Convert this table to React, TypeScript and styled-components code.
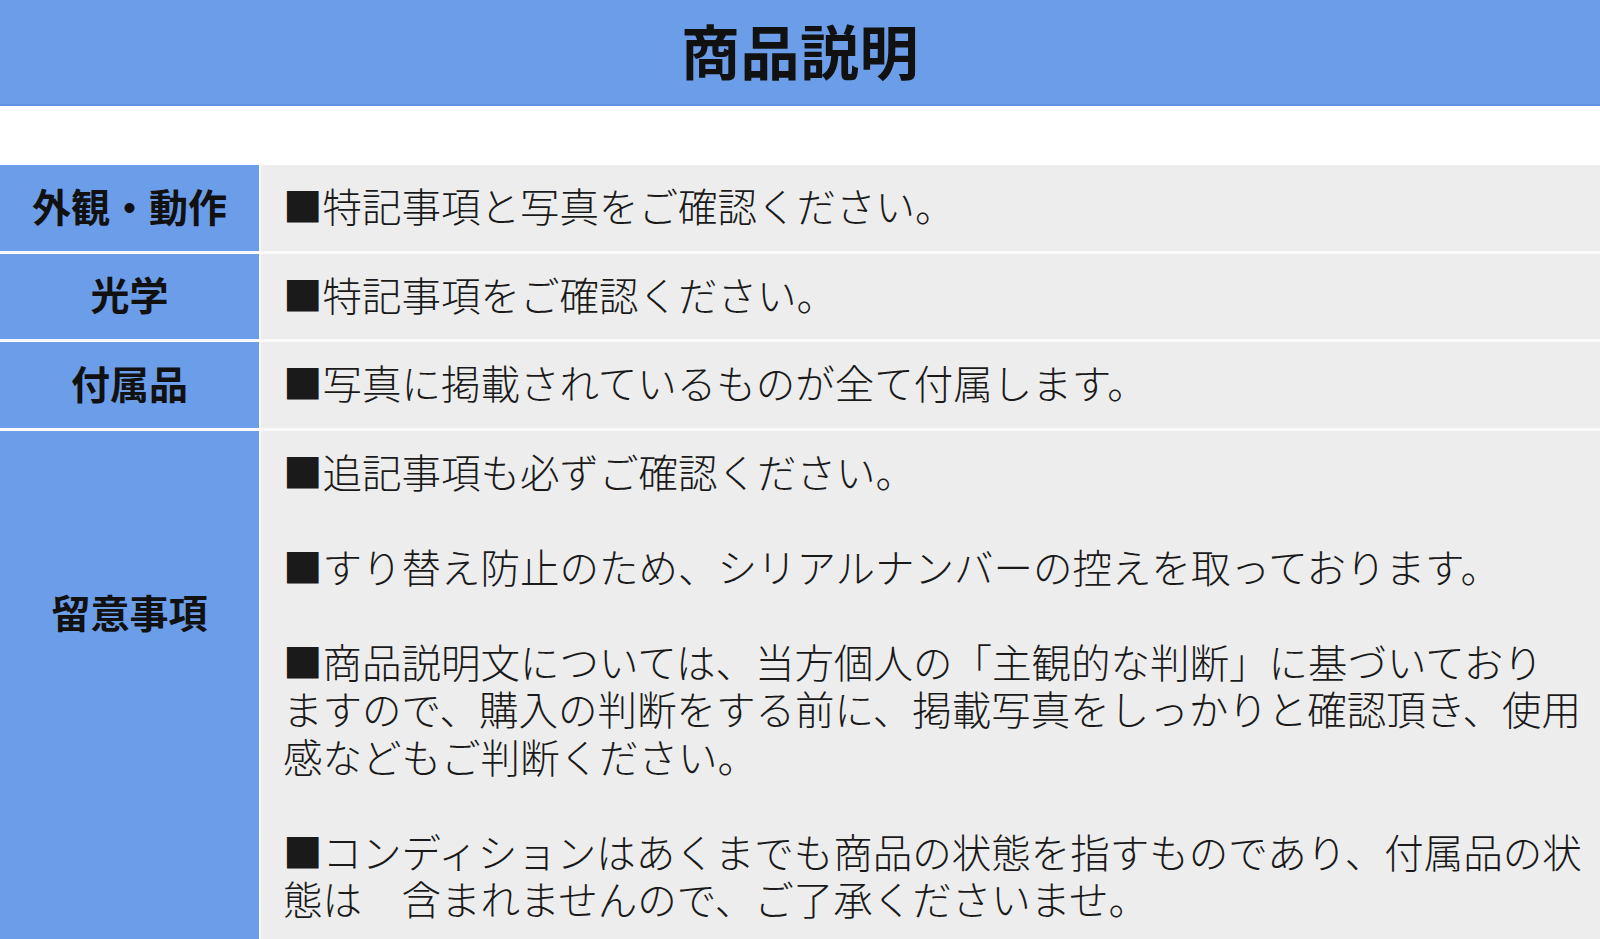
import React from 'react';
import styled, { createGlobalStyle } from 'styled-components';

const GlobalStyle = createGlobalStyle`
  html, body {
    margin: 0;
    padding: 0;
    background: #ffffff;
  }
  body {
    font-family: "Noto Sans CJK JP", "Noto Sans", sans-serif;
    color: #111;
  }
`;

const Page = styled.div`
  width: 100%;
  min-height: 939px;
  background: #fff;
`;

const Header = styled.header`
  height: 106px;
  background: #6c9de9;
  border-bottom: 2px solid #5f92e2;
  display: flex;
  align-items: center;
  justify-content: center;
  padding-bottom: 6px;
  box-sizing: border-box;
`;

const Title = styled.h1`
  margin: 0;
  font-size: 59px;
  font-weight: 700;
  line-height: 1;
  color: #111;
  letter-spacing: 0.5px;
`;

const Spacer = styled.div`
  height: 59px;
`;

const Table = styled.div`
  display: grid;
  grid-template-columns: 259px 1fr;
  column-gap: 2px;
  row-gap: 3px;
  background: #fafafa;
`;

const Label = styled.div<{ $top?: number }>`
  background: #6c9de9;
  display: flex;
  align-items: ${(p) => (p.$top ? 'flex-start' : 'center')};
  justify-content: center;
  padding-top: ${(p) => (p.$top ? `${p.$top}px` : '0')};
  padding-bottom: ${(p) => (p.$top ? '0' : '5px')};
  font-size: 39px;
  line-height: 47px;
  font-weight: 700;
  color: #111;
`;

const Cell = styled.div`
  background: #ededed;
  padding: 16px 6px 22px 22px;
  font-size: 39.5px;
  line-height: 47.5px;
  color: #1a1a1a;
  font-weight: 300;
  min-width: 0;
`;

const Para = styled.p<{ $gap?: boolean }>`
  margin: 0;
  margin-top: ${(p) => (p.$gap ? '47.5px' : '0')};
  white-space: nowrap;
`;

const rows: { label: string; top?: number; paras: React.ReactNode[] }[] = [
  { label: '外観・動作', paras: ['■特記事項と写真をご確認ください。'] },
  { label: '光学', paras: ['■特記事項をご確認ください。'] },
  { label: '付属品', paras: ['■写真に掲載されているものが全て付属します。'] },
  {
    label: '留意事項',
    top: 157,
    paras: [
      '■追記事項も必ずご確認ください。',
      '■すり替え防止のため、シリアルナンバーの控えを取っております。',
      <>
        ■商品説明文については、当方個人の「主観的な判断」に基づいており
        <br />
        ますので、購入の判断をする前に、掲載写真をしっかりと確認頂き、使用
        <br />
        感などもご判断ください。
      </>,
      <>
        ■コンディションはあくまでも商品の状態を指すものであり、付属品の状
        <br />
        態は　含まれませんので、ご了承くださいませ。
      </>,
    ],
  },
];

export default function App() {
  return (
    <Page>
      <GlobalStyle />
      <Header>
        <Title>商品説明</Title>
      </Header>
      <Spacer />
      <Table>
        {rows.map((r) => (
          <React.Fragment key={r.label}>
            <Label $top={r.top}>{r.label}</Label>
            <Cell>
              {r.paras.map((p, i) => (
                <Para key={i} $gap={i > 0}>
                  {p}
                </Para>
              ))}
            </Cell>
          </React.Fragment>
        ))}
      </Table>
    </Page>
  );
}
